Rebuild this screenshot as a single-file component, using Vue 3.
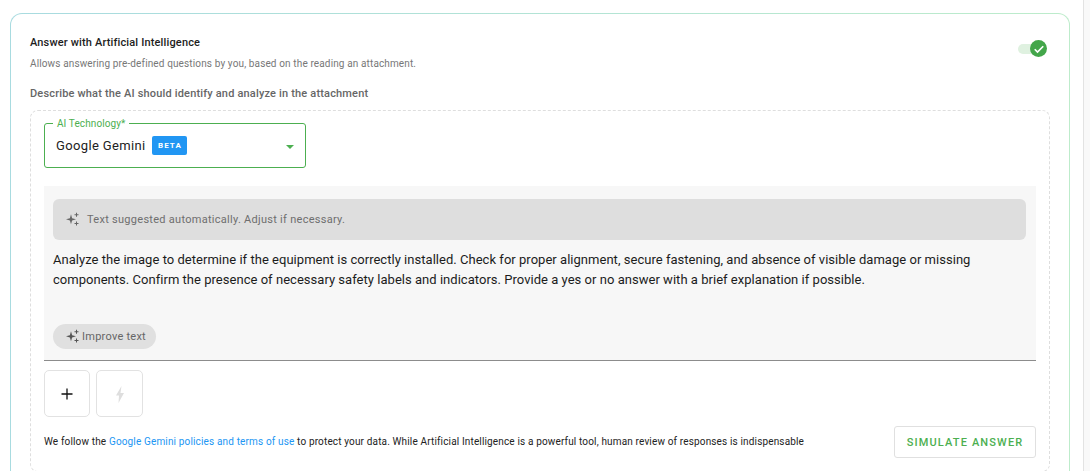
<template>
  <div class="page">
    <main class="content">
      <section class="card">
        <div class="head">
          <div>
            <div class="title">Answer with Artificial Intelligence</div>
            <div class="subtitle">Allows answering pre-defined questions by you, based on the reading an attachment.</div>
          </div>
          <div class="toggle">
            <span class="track"></span>
            <span class="thumb">
              <svg width="12" height="12" viewBox="0 0 24 24"><path d="M3.5 12.5l5.5 5.5L20.5 6.5" fill="none" stroke="#fff" stroke-width="3.4" /></svg>
            </span>
          </div>
        </div>
        <div class="describe">Describe what the AI should identify and analyze in the attachment</div>

        <div class="dashed">
          <div class="select">
            <span class="select-label">AI Technology*</span>
            <span class="select-value">Google Gemini</span>
            <span class="beta">BETA</span>
            <span class="caret"></span>
          </div>

          <div class="panel">
            <div class="alert">
              <svg class="spark" width="16" height="16" viewBox="0 0 16 16">
                <path :d="sparkPath" fill="#666" />
              </svg>
              <span>Text suggested automatically. Adjust if necessary.</span>
            </div>
            <p class="prompt">Analyze the image to determine if the equipment is correctly installed. Check for proper alignment, secure fastening, and absence of visible damage or missing components. Confirm the presence of necessary safety labels and indicators. Provide a yes or no answer with a brief explanation if possible.</p>
            <button class="improve">
              <svg width="16" height="16" viewBox="0 0 16 16">
                <path :d="sparkPath" fill="#555" />
              </svg>
              <span>Improve text</span>
            </button>
          </div>

          <div class="tools">
            <button class="tool">
              <svg width="14" height="14" viewBox="0 0 14 14"><path d="M7 1.5v11M1.5 7h11" stroke="#111" stroke-width="1.3" fill="none" /></svg>
            </button>
            <button class="tool">
              <svg width="16" height="20" viewBox="0 0 16 20"><path d="M9.5 2L4 11.5h3L6.5 19 12 9H8.5z" fill="#dedede" /></svg>
            </button>
          </div>

          <div class="foot">
            <p class="notice">We follow the <a>Google Gemini policies and terms of use</a> to protect your data. While Artificial Intelligence is a powerful tool, human review of responses is indispensable</p>
            <button class="simulate">SIMULATE ANSWER</button>
          </div>
        </div>
      </section>
    </main>
    <aside class="rail"></aside>
  </div>
</template>

<script setup>
// four point star plus the two small crosses at its right
const sparkPath = 'M6 2.3L7.1 6.2 11 7.3 7.1 8.4 6 12.3 4.9 8.4 1 7.3 4.9 6.2zM11 .7h1v1.5h1.5v1H12v1.5h-1V3.2H9.5v-1H11zM11 9.5h1V11h1.5v1H12v1.5h-1V12H9.5v-1H11z'
</script>

<style>
html, body {
  margin: 0;
  height: 471px;
  overflow: hidden;
  background: #fff;
}
</style>

<style scoped>
.page {
  display: flex;
  width: 1090px;
  height: 471px;
  overflow: hidden;
  font-family: Roboto, "Liberation Sans", sans-serif;
}

.content {
  width: 1083px;
  flex: none;
  padding: 13px 13px 0 10px;
  box-sizing: border-box;
}

.rail {
  flex: 1;
  background: #f9f9f9;
  border-left: 1px solid #e3e3e3;
}

.card {
  box-sizing: border-box;
  height: 520px;
  padding: 21px 19px 0 19px;
  border: 1px solid transparent;
  border-radius: 12px;
  background:
    linear-gradient(#fff, #fff) padding-box,
    linear-gradient(90deg, #a8dbe0, #bdeccb) border-box;
}

.head {
  display: flex;
  justify-content: space-between;
  align-items: flex-start;
}

.title {
  font-size: 11px;
  font-weight: 500;
  line-height: 16px;
  letter-spacing: 0.15px;
  color: #1d1d1d;
}

.subtitle {
  margin-top: 6px;
  font-size: 10px;
  line-height: 14px;
  letter-spacing: 0.13px;
  color: #777;
}

.toggle {
  position: relative;
  width: 30px;
  height: 18px;
  margin: 5px 3px 0 0;
}

.track {
  position: absolute;
  left: 1px;
  top: 4px;
  width: 24px;
  height: 10px;
  border-radius: 5px;
  background: #dff1e0;
}

.thumb {
  position: absolute;
  left: 13px;
  top: 0;
  width: 17px;
  height: 17px;
  border-radius: 50%;
  background: #43a64a;
  display: flex;
  align-items: center;
  justify-content: center;
}

.describe {
  margin-top: 15px;
  font-size: 11px;
  font-weight: 500;
  line-height: 16px;
  letter-spacing: 0.17px;
  color: #666;
}

.dashed {
  margin-top: 8px;
  box-sizing: border-box;
  height: 362px;
  padding: 12px 13px 0;
  border: 1px dashed #dedede;
  border-radius: 8px;
}

.select {
  position: relative;
  box-sizing: border-box;
  width: 262px;
  height: 45px;
  padding: 0 11px;
  border: 1px solid #4caf50;
  border-radius: 3px;
  display: flex;
  align-items: center;
}

.select-label {
  position: absolute;
  left: 8px;
  top: -6px;
  padding: 0 4px;
  background: #fff;
  font-size: 10px;
  line-height: 11px;
  letter-spacing: 0.1px;
  color: #4caf50;
}

.select-value {
  font-size: 13px;
  letter-spacing: 0.35px;
  color: #222;
}

.beta {
  margin-left: 7px;
  width: 35px;
  height: 19px;
  border-radius: 2px;
  background: #2196f3;
  color: #fff;
  font-size: 8px;
  font-weight: 700;
  letter-spacing: 1.1px;
  display: flex;
  align-items: center;
  justify-content: center;
}

.caret {
  position: absolute;
  right: 11px;
  top: 21px;
  border-left: 4.5px solid transparent;
  border-right: 4.5px solid transparent;
  border-top: 4.5px solid #4caf50;
}

.panel {
  box-sizing: border-box;
  height: 175px;
  margin-top: 18px;
  padding: 13px 10px 0 9px;
  background: #f7f7f7;
  border-bottom: 1px solid #8c8c8c;
}

.alert {
  box-sizing: border-box;
  height: 41px;
  padding: 0 12px;
  border-radius: 6px;
  background: #dedede;
  display: flex;
  align-items: center;
  gap: 6px;
  font-size: 11px;
  letter-spacing: 0.28px;
  color: #6e6e6e;
}

.prompt {
  margin: 10px 0 0;
  height: 64px;
  font-size: 13px;
  line-height: 20px;
  letter-spacing: 0.03px;
  color: #1c1c1c;
}

.improve {
  margin-top: 10px;
  box-sizing: border-box;
  width: 103px;
  height: 25px;
  padding: 0 0 0 12px;
  border: 0;
  border-radius: 13px;
  background: #e0e0e0;
  display: flex;
  align-items: center;
  gap: 1px;
  font-family: inherit;
  font-size: 11px;
  letter-spacing: 0.25px;
  color: #666;
}

.tools {
  margin-top: 9px;
  display: flex;
  gap: 6px;
}

.tool {
  box-sizing: border-box;
  width: 46px;
  height: 47px;
  padding: 0;
  border: 1px solid #e2e2e2;
  border-radius: 5px;
  background: #fff;
  display: flex;
  align-items: center;
  justify-content: center;
}

.tool + .tool {
  width: 47px;
}

.foot {
  margin-top: 9px;
  display: flex;
  align-items: center;
  justify-content: space-between;
}

.notice {
  margin: 0;
  font-size: 10px;
  line-height: 14px;
  letter-spacing: 0.15px;
  color: #222;
}

.notice a {
  color: #2196f3;
}

.simulate {
  box-sizing: border-box;
  width: 142px;
  height: 32px;
  padding: 0;
  border: 1px solid #e0e0e0;
  border-radius: 3px;
  background: #fff;
  font-family: inherit;
  font-size: 11px;
  font-weight: 500;
  letter-spacing: 1.15px;
  color: #4caf50;
}
</style>
